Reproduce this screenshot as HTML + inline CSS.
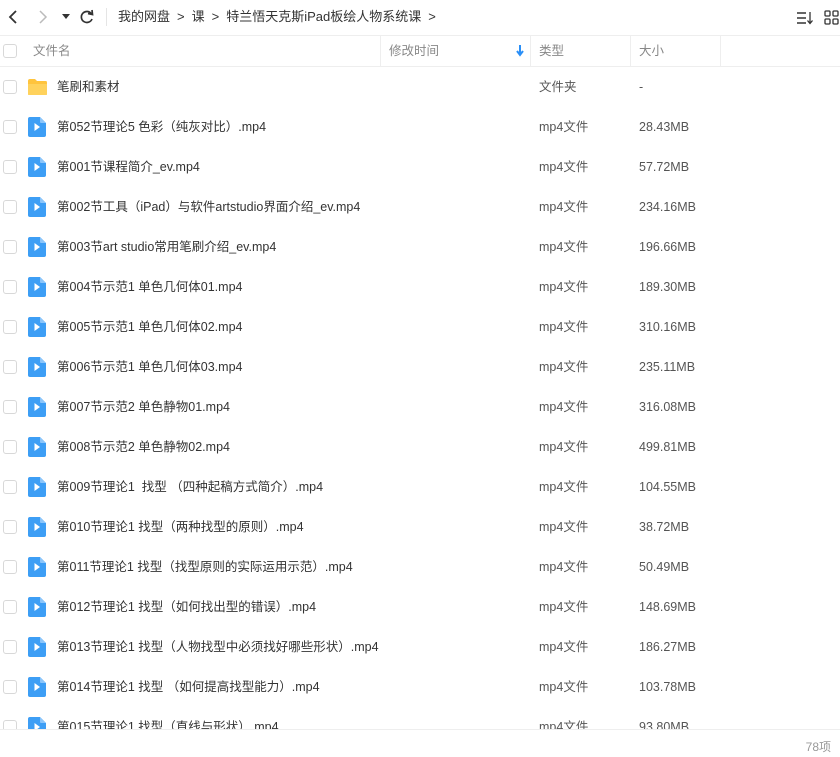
<!DOCTYPE html>
<html><head><meta charset="utf-8"><style>
*{margin:0;padding:0;box-sizing:border-box}
body{width:840px;height:757px;overflow:hidden;background:#fff;font-family:"Liberation Sans","Noto Sans CJK SC",sans-serif;font-size:12.5px;color:#333;position:relative}
.tb{position:absolute;top:0;left:0;width:840px;height:34px}
.bc{position:absolute;left:118px;top:0;line-height:34px;font-size:13px;color:#333;white-space:nowrap}
.bc span{margin:0 7px}
.hd{position:absolute;top:35px;left:0;width:840px;height:32px;border-top:1px solid #eee;border-bottom:1px solid #eee;color:#888}
.col{position:absolute;top:0;height:30px;line-height:30px;border-right:1px solid #eee}
.cb{position:absolute;width:14px;height:14px;border:1px solid #d8d8d8;border-radius:3px;left:3px;background:#fff}
.row{position:absolute;left:0;width:840px;height:40px;line-height:40px}
.row .cb{top:13px}
.nm{position:absolute;left:57px;top:0;white-space:nowrap}
.ty{position:absolute;left:539px;top:0;color:#555}
.sz{position:absolute;left:639px;top:0;color:#555}
.ic{position:absolute;left:28px;top:10px}
.ft{position:absolute;top:729px;left:0;width:840px;height:28px;background:#fff;border-top:1px solid #eee}
</style></head><body>
<div class="tb">
<svg style="position:absolute;left:6px;top:9px" width="14" height="16"><path d="M10 2 L4 8 L10 14" stroke="#333" stroke-width="1.8" fill="none"/></svg>
<svg style="position:absolute;left:36px;top:9px" width="14" height="16"><path d="M4 2 L10 8 L4 14" stroke="#bbb" stroke-width="1.5" fill="none"/></svg>
<svg style="position:absolute;left:62px;top:14px" width="8" height="6"><path d="M0 0 L8 0 L4 5Z" fill="#333"/></svg>
<svg style="position:absolute;left:79px;top:9px" width="16" height="16"><path d="M12.5 5 A5.5 5.5 0 1 0 13 10" stroke="#333" stroke-width="1.7" fill="none"/><path d="M9 4.5 L13.5 5.5 L13 1" stroke="#333" stroke-width="1.7" fill="none"/></svg>
<div style="position:absolute;left:106px;top:8px;width:1px;height:18px;background:#e5e5e5"></div>
<div class="bc">我的网盘<span>&gt;</span>课<span>&gt;</span>特兰悟天克斯iPad板绘人物系统课<span>&gt;</span></div>
<svg style="position:absolute;left:796px;top:11px" width="18" height="14"><path d="M1 2H10M1 7H10M1 12H10" stroke="#333" stroke-width="1.4"/><path d="M14 1V12M11.5 9.5L14 12.5L16.5 9.5" stroke="#333" stroke-width="1.3" fill="none"/></svg>
<svg style="position:absolute;left:824px;top:10px" width="16" height="16"><rect x="1" y="1" width="5" height="5" rx="1" stroke="#333" stroke-width="1.3" fill="none"/><rect x="9" y="1" width="5" height="5" rx="1" stroke="#333" stroke-width="1.3" fill="none"/><rect x="1" y="9" width="5" height="5" rx="1" stroke="#333" stroke-width="1.3" fill="none"/><rect x="9" y="9" width="5" height="5" rx="1" stroke="#333" stroke-width="1.3" fill="none"/></svg>
</div>
<div class="hd">
<div class="col" style="left:0;width:381px;padding-left:33px">文件名</div>
<div class="col" style="left:381px;width:150px;padding-left:8px">修改时间<svg style="position:absolute;right:6px;top:9px" width="8" height="12"><path d="M4 0V9M1 6L4 10L7 6" stroke="#2a8ff7" stroke-width="2" fill="none"/></svg></div>
<div class="col" style="left:531px;width:100px;padding-left:8px">类型</div>
<div class="col" style="left:631px;width:90px;padding-left:8px">大小</div>
<div class="cb" style="top:8px"></div>
</div>
<div id="rows"></div>
<div class="row" style="top:67px"><div class="cb"></div><svg class="ic" style="left:27px;top:11px" width="21" height="18"><path d="M1 3 Q1 1 3 1 H8 L10 3 H19 Q20 3 20 5 V16 Q20 17 19 17 H2 Q1 17 1 16Z" fill="#ffc43d"/><path d="M1 6 H20 V16 Q20 17 19 17 H2 Q1 17 1 16Z" fill="#ffd25c"/></svg><div class="nm">笔刷和素材</div><div class="ty">文件夹</div><div class="sz">-</div></div>
<script>
var d=[["第052节理论5 色彩（纯灰对比）.mp4","28.43MB"],["第001节课程简介_ev.mp4","57.72MB"],["第002节工具（iPad）与软件artstudio界面介绍_ev.mp4","234.16MB"],["第003节art studio常用笔刷介绍_ev.mp4","196.66MB"],["第004节示范1 单色几何体01.mp4","189.30MB"],["第005节示范1 单色几何体02.mp4","310.16MB"],["第006节示范1 单色几何体03.mp4","235.11MB"],["第007节示范2 单色静物01.mp4","316.08MB"],["第008节示范2 单色静物02.mp4","499.81MB"],["第009节理论1  找型 （四种起稿方式简介）.mp4","104.55MB"],["第010节理论1 找型（两种找型的原则）.mp4","38.72MB"],["第011节理论1 找型（找型原则的实际运用示范）.mp4","50.49MB"],["第012节理论1 找型（如何找出型的错误）.mp4","148.69MB"],["第013节理论1 找型（人物找型中必须找好哪些形状）.mp4","186.27MB"],["第014节理论1 找型 （如何提高找型能力）.mp4","103.78MB"],["第015节理论1 找型（直线与形状）.mp4","93.80MB"]];
var h="";d.forEach(function(r,i){h+='<div class="row" style="top:'+(107+i*40)+'px"><div class="cb"></div><svg class="ic" width="18" height="20"><path d="M2 0 H12 L18 6 V18 Q18 20 16 20 H2 Q0 20 0 18 V2 Q0 0 2 0Z" fill="#3d9ef5"/><path d="M12 0 L18 6 H13 Q12 6 12 5Z" fill="#8cc6fb"/><path d="M6.5 6 L12 10 L6.5 14Z" fill="#fff"/></svg><div class="nm">'+r[0].replace(/ /g,'&nbsp;')+'</div><div class="ty">mp4文件</div><div class="sz">'+r[1]+'</div></div>'});
document.getElementById("rows").innerHTML=h;
</script>
<div class="ft"><div style="position:absolute;right:9px;top:8px;color:#999;font-size:12px">78项</div></div>
</body></html>
